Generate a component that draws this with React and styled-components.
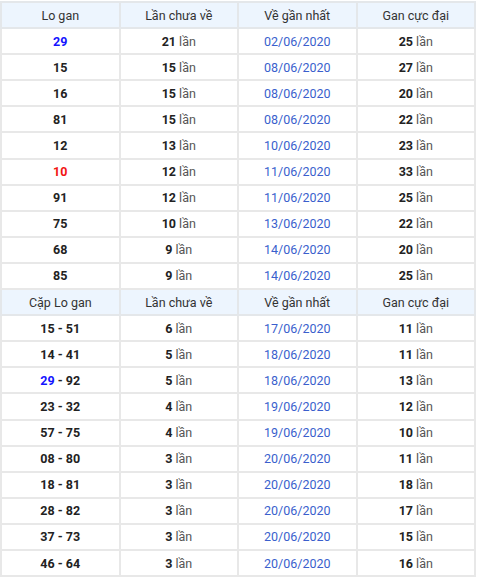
import styled, { createGlobalStyle } from "styled-components";

const GlobalStyle = createGlobalStyle`
  body {
    margin: 0;
    background: #ffffff;
    font-family: Roboto, "Liberation Sans", Arial, sans-serif;
  }
`

const Wrapper = styled.div`
  width: 476px;
  padding-top: 1px;
`

const Table = styled.table`
  width: 476px;
  border-collapse: collapse;
  table-layout: fixed;
  border-left: 2px solid #cfcfcf;
  border-right: 2px solid #e2e2e2;
  border-bottom: 2px solid #e2e2e2;
`

const HeadRow = styled.tr`
  height: 26.1px;
  background: #edf5fe;
`

const Row = styled.tr`
  height: 26.1px;
  background: #ffffff;
`

const HeadCell = styled.td`
  border: 2px solid #e4e7ea;
  padding: 0;
  text-align: center;
  font-size: 12.5px;
  color: #333333;
`

const Cell = styled.td`
  border: 2px solid #e8e8e8;
  padding: 0;
  text-align: center;
  font-size: 12.5px;
`

const Num = styled.b`
  color: ${(p) => (p.$tone === "blue" ? "#1414ff" : p.$tone === "red" ? "#f21414" : "#222222")};
  font-weight: 700;
`

const Unit = styled.span`
  color: #555555;
`

const DateText = styled.span`
  color: #3a5fcd;
`

const Count = ({ n }) => (
  <>
    <Num>{n}</Num> <Unit>lần</Unit>
  </>
)

const single = [
  ["29", 21, "02/06/2020", 25, "blue"],
  ["15", 15, "08/06/2020", 27],
  ["16", 15, "08/06/2020", 20],
  ["81", 15, "08/06/2020", 22],
  ["12", 13, "10/06/2020", 23],
  ["10", 12, "11/06/2020", 33, "red"],
  ["91", 12, "11/06/2020", 25],
  ["75", 10, "13/06/2020", 22],
  ["68", 9, "14/06/2020", 20],
  ["85", 9, "14/06/2020", 25],
]

const pairs = [
  ["15", "51", 6, "17/06/2020", 11],
  ["14", "41", 5, "18/06/2020", 11],
  ["29", "92", 5, "18/06/2020", 13, "blue"],
  ["23", "32", 4, "19/06/2020", 12],
  ["57", "75", 4, "19/06/2020", 10],
  ["08", "80", 3, "20/06/2020", 11],
  ["18", "81", 3, "20/06/2020", 18],
  ["28", "82", 3, "20/06/2020", 17],
  ["37", "73", 3, "20/06/2020", 15],
  ["46", "64", 3, "20/06/2020", 16],
]

const Header = ({ first }) => (
  <HeadRow>
    <HeadCell>{first}</HeadCell>
    <HeadCell>Lần chưa về</HeadCell>
    <HeadCell>Về gần nhất</HeadCell>
    <HeadCell>Gan cực đại</HeadCell>
  </HeadRow>
)

export default function App() {
  return (
    <Wrapper>
      <GlobalStyle />
      <Table>
        <tbody>
          <Header first="Lo gan" />
          {single.map(([lo, miss, date, max, tone]) => (
            <Row key={lo}>
              <Cell><Num $tone={tone}>{lo}</Num></Cell>
              <Cell><Count n={miss} /></Cell>
              <Cell><DateText>{date}</DateText></Cell>
              <Cell><Count n={max} /></Cell>
            </Row>
          ))}
          <Header first="Cặp Lo gan" />
          {pairs.map(([a, b, miss, date, max, tone]) => (
            <Row key={a + b}>
              <Cell><Num $tone={tone}>{a}</Num><Num> - {b}</Num></Cell>
              <Cell><Count n={miss} /></Cell>
              <Cell><DateText>{date}</DateText></Cell>
              <Cell><Count n={max} /></Cell>
            </Row>
          ))}
        </tbody>
      </Table>
    </Wrapper>
  );
}
